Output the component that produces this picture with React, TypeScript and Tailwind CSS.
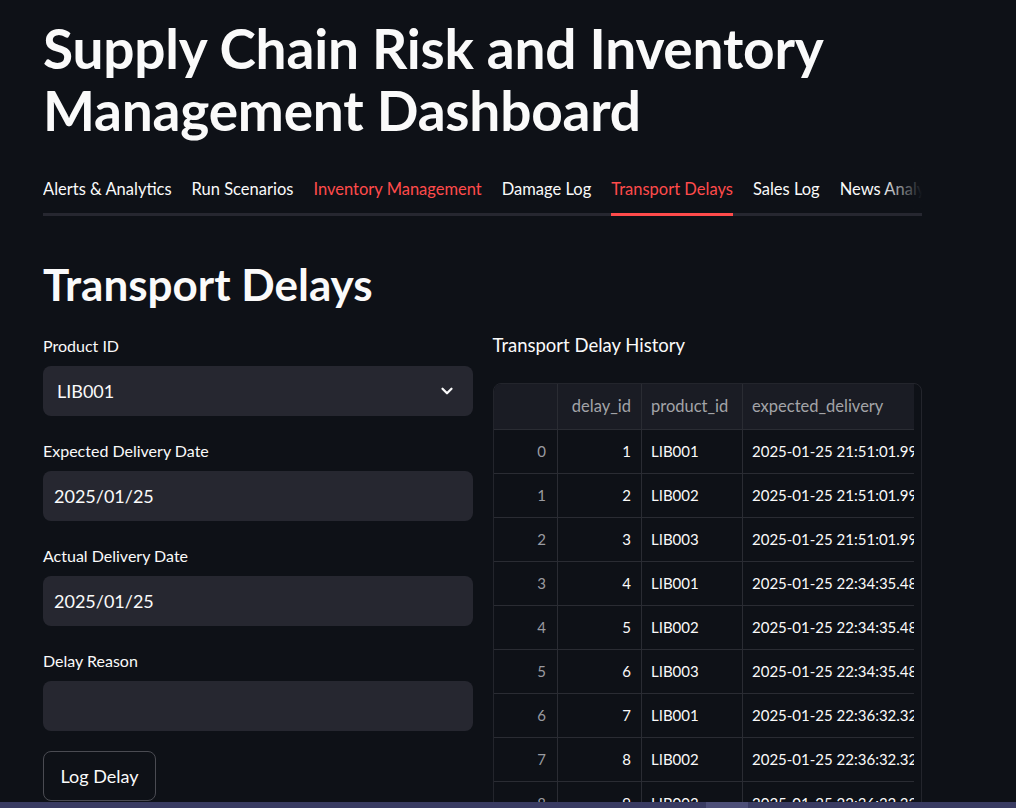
import { ChevronDown } from "lucide-react"

const tabs = [
  { label: "Alerts & Analytics", color: "text-[#fafafa]" },
  { label: "Run Scenarios", color: "text-[#fafafa]" },
  { label: "Inventory Management", color: "text-[#ff4b4b]" },
  { label: "Damage Log", color: "text-[#fafafa]" },
  { label: "Transport Delays", color: "text-[#ff4b4b]", active: true },
  { label: "Sales Log", color: "text-[#fafafa]" },
  { label: "News Analysis", color: "text-[#fafafa]" },
]

const rows = [
  { id: 1, product: "LIB001", expected: "2025-01-25 21:51:01.997" },
  { id: 2, product: "LIB002", expected: "2025-01-25 21:51:01.997" },
  { id: 3, product: "LIB003", expected: "2025-01-25 21:51:01.997" },
  { id: 4, product: "LIB001", expected: "2025-01-25 22:34:35.482" },
  { id: 5, product: "LIB002", expected: "2025-01-25 22:34:35.482" },
  { id: 6, product: "LIB003", expected: "2025-01-25 22:34:35.482" },
  { id: 7, product: "LIB001", expected: "2025-01-25 22:36:32.321" },
  { id: 8, product: "LIB002", expected: "2025-01-25 22:36:32.321" },
  { id: 9, product: "LIB003", expected: "2025-01-25 22:36:32.321" },
]

function Field({ label, children }: { label: string; children: React.ReactNode }) {
  return (
    <div className="flex flex-col">
      <div className="h-[40px] flex items-center text-[16px] text-[#fafafa]">{label}</div>
      <div className="h-[50px] rounded-lg bg-[#262730] flex items-center px-[11px] text-[18px] text-[#fafafa]">
        {children}
      </div>
    </div>
  )
}

export default function App() {
  return (
    <div
      className="h-screen w-full flex flex-col bg-[#0e1117] text-[#fafafa] overflow-hidden"
      style={{ fontFamily: "Lato, 'Noto Sans', sans-serif" }}
    >
      <main className="flex-1 overflow-hidden pl-[43px] pt-[17px]">
        <div className="w-[879px]">
          {/* Title */}
          <h1 className="text-[55px] leading-[62px] font-bold tracking-[-0.2px]">
            Supply Chain Risk and Inventory Management Dashboard
          </h1>

          {/* Tabs */}
          <div className="relative mt-[21px]">
            <div className="flex gap-[20px] h-[54px] items-center whitespace-nowrap overflow-hidden">
              {tabs.map((t) => (
                <div key={t.label} className={`relative h-full flex items-center text-[16.5px] ${t.color}`}>
                  {t.label}
                  {t.active && <div className="absolute left-0 right-0 bottom-0 h-[3px] bg-[#ff4b4b]" />}
                </div>
              ))}
            </div>
            <div className="h-[3px] -mt-[3px] bg-[#262730]" />
            <div className="absolute right-0 top-0 h-[51px] w-[40px] bg-gradient-to-r from-transparent to-[#0e1117]" />
          </div>

          {/* Section header */}
          <h2 className="mt-[40px] text-[44px] leading-[56px] font-bold">Transport Delays</h2>

          <div className="mt-[14px] grid grid-cols-2 gap-[20px]">
            {/* Form */}
            <div className="flex flex-col gap-[15px]">
              <Field label="Product ID">
                <div className="flex-1 pl-[3px]">LIB001</div>
                <ChevronDown className="w-[18px] h-[18px] mr-[6px]" strokeWidth={3} />
              </Field>
              <Field label="Expected Delivery Date">2025/01/25</Field>
              <Field label="Actual Delivery Date">2025/01/25</Field>
              <Field label="Delay Reason">{""}</Field>
              <button className="mt-[5px] w-[113px] h-[50px] rounded-lg border border-[#4a4b52] text-[18px] text-[#fafafa] bg-[#0e1117]">
                Log Delay
              </button>
            </div>

            {/* History */}
            <div className="flex flex-col">
              <div className="h-[40px] flex items-center text-[18.5px]">Transport Delay History</div>
              <div className="mt-[17px] rounded-lg border border-[#23252c] pr-[7px] overflow-hidden">
                <div className="overflow-hidden">
                  <table className="border-collapse text-[15px] whitespace-nowrap table-fixed w-[560px]">
                    <colgroup>
                      <col className="w-[64px]" />
                      <col className="w-[84px]" />
                      <col className="w-[101px]" />
                      <col className="w-[311px]" />
                    </colgroup>
                    <thead>
                      <tr className="h-[45px] bg-[#1a1c24] text-[#a3a4a8] text-[16.5px]">
                        <th className="border-r border-b border-[#2a2c33]"></th>
                        <th className="border-r border-b border-[#2a2c33] text-right pr-[10px] font-normal">delay_id</th>
                        <th className="border-r border-b border-[#2a2c33] text-left pl-[9px] font-normal">product_id</th>
                        <th className="border-b border-[#2a2c33] text-left pl-[9px] font-normal">expected_delivery</th>
                      </tr>
                    </thead>
                    <tbody>
                      {rows.map((r, i) => (
                        <tr key={r.id} className="h-[44px]">
                          <td className="border-r border-b border-[#2a2c33] text-right pr-[11px] text-[#9a9ba1]">{i}</td>
                          <td className="border-r border-b border-[#2a2c33] text-right pr-[10px]">{r.id}</td>
                          <td className="border-r border-b border-[#2a2c33] pl-[9px]">{r.product}</td>
                          <td className="border-b border-[#2a2c33] pl-[9px]">{r.expected}</td>
                        </tr>
                      ))}
                    </tbody>
                  </table>
                </div>
              </div>
            </div>
          </div>
        </div>
      </main>
      {/* window scrollbar */}
      <div className="h-[6px] bg-[#393b62] relative shrink-0">
        <div className="absolute left-[706px] w-[42px] top-0 h-full bg-[#4d4f78]" />
      </div>
    </div>
  )
}
